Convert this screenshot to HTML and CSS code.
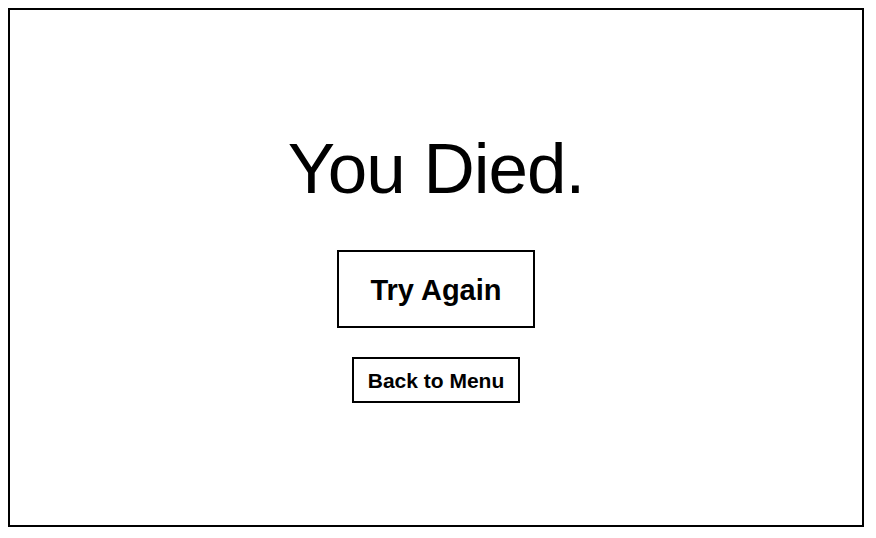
FILE: index.html
```html
<!DOCTYPE html>
<html lang="en">
<head>
<meta charset="utf-8">
<title>You Died</title>
<link rel="stylesheet" href="styles.css">
</head>
<body>
<main class="screen">
  <h1 class="title">You Died.</h1>
  <button class="btn btn-primary" type="button">Try Again</button>
  <button class="btn btn-secondary" type="button">Back to Menu</button>
</main>
</body>
</html>
```
FILE: styles.css
```css
html, body {
  margin: 0;
  padding: 0;
  background: #ffffff;
}
body {
  padding: 8px;
  font-family: "Liberation Sans", Arial, Helvetica, sans-serif;
  color: #000;
}
.screen {
  box-sizing: border-box;
  width: 856px;
  height: 519px;
  border: 2px solid #000;
  padding-top: 123px;
  display: flex;
  flex-direction: column;
  align-items: center;
}
.title {
  margin: 0 0 45px 0;
  font-size: 71px;
  line-height: 72px;
  font-weight: 400;
  letter-spacing: -1px;
}
.btn {
  box-sizing: border-box;
  font-family: "Liberation Sans", Arial, Helvetica, sans-serif;
  background: #fff;
  color: #000;
  border: 2px solid #000;
  border-radius: 0;
  font-weight: 700;
  margin: 0;
  cursor: pointer;
}
.btn-primary {
  font-size: 29px;
  line-height: 32px;
  padding: 22px 31px 20px;
  margin-bottom: 29px;
}
.btn-secondary {
  font-size: 21px;
  line-height: 24px;
  padding: 10px 14px 8px;
}
```
